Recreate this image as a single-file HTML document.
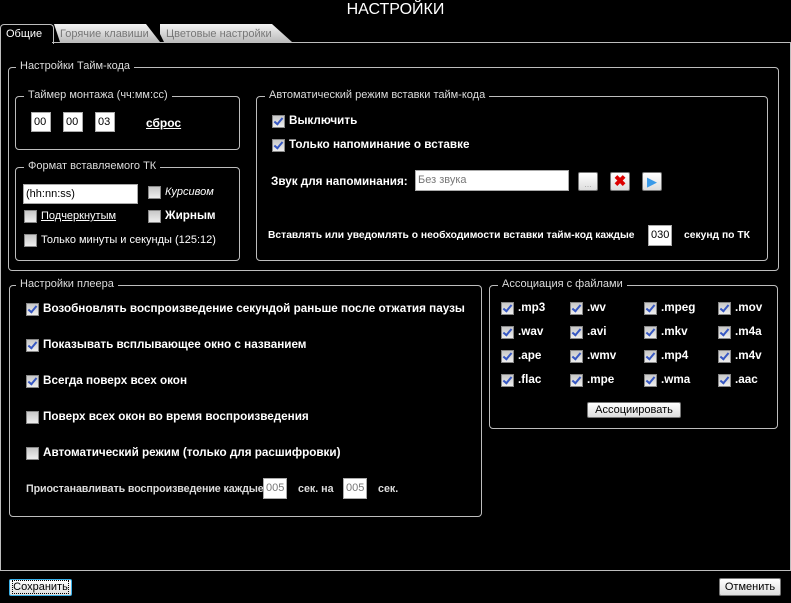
<!DOCTYPE html>
<html><head><meta charset="utf-8"><style>
body{margin:0;width:791px;height:603px;background:#000;position:relative;overflow:hidden;font-family:"Liberation Sans",sans-serif;font-size:11px;color:#fff}
.a{position:absolute;white-space:nowrap}
.g{position:absolute;border:1px solid #bdbdbd;border-radius:4px}
.gl{position:absolute;background:#000;padding:0 4px;color:#ddd;font-size:11px;white-space:nowrap}
.in{position:absolute;background:#fff;border:1px solid #aaa;color:#000;font-size:11px;box-sizing:border-box;padding:3px 2px}
.cb{position:absolute;width:13px;height:13px;background:linear-gradient(#c8c8c8,#eee);border:1px solid #888;box-sizing:border-box}
.cb.c::after{content:"";position:absolute;left:3px;top:0px;width:3px;height:7px;border:solid #3657c2;border-width:0 2px 2px 0;transform:rotate(40deg)}
.b{font-weight:bold}
.L{font-size:11.7px}
.btn{position:absolute;background:linear-gradient(#fff,#ddd);border:1px solid #777;border-radius:2px;color:#000;font-size:11px;text-align:center;box-sizing:border-box}
</style></head><body>
<div class="a" style="left:0;width:791px;text-align:center;top:1px;font-size:16px;color:#fff">НАСТРОЙКИ</div>
<div class="a" style="left:160px;top:24px;width:126px;height:18px;background:linear-gradient(#f4f4f4,#bbb);clip-path:polygon(0 0,112px 0,100% 100%,4px 100%,0 10px);color:#777;padding-left:6px;line-height:20px">Цветовые настройки</div>
<div class="a" style="left:54px;top:24px;width:100px;height:18px;background:linear-gradient(#f4f4f4,#bbb);clip-path:polygon(0 0,92px 0,100% 100%,6px 100%);color:#777;padding-left:6px;line-height:20px">Горячие клавиши</div>
<div class="a" style="left:0;top:24px;width:52px;height:19px;border:1px solid #bdbdbd;border-bottom:none;border-radius:4px 4px 0 0;background:#000"></div>
<div class="a" style="left:6px;top:28px;color:#fff">Общие</div>
<div class="a" style="left:0;top:42px;width:789px;height:528px;border:1px solid #bdbdbd;border-top:none"></div>
<div class="a" style="left:52px;top:42px;width:738px;height:1px;background:#bdbdbd"></div>

<div class="g" style="left:8px;top:67px;width:769px;height:202px"></div>
<div class="gl" style="left:16px;top:60px">Настройки Тайм-кода</div>
<div class="g" style="left:15px;top:96px;width:223px;height:52px"></div>
<div class="gl" style="left:24px;top:89px">Таймер монтажа (чч:мм:сс)</div>
<div class="in" style="left:31px;top:112px;width:20px;height:20px">00</div>
<div class="in" style="left:63px;top:112px;width:20px;height:20px">00</div>
<div class="in" style="left:95px;top:112px;width:20px;height:20px">03</div>
<div class="a b" style="left:146px;top:116px;text-decoration:underline;font-size:12px">сброс</div>

<div class="g" style="left:15px;top:167px;width:223px;height:92px"></div>
<div class="gl" style="left:24px;top:160px">Формат вставляемого ТК</div>
<div class="in" style="left:23px;top:184px;width:115px;height:20px">(hh:nn:ss)</div>
<div class="cb" style="left:148px;top:186px"></div><div class="a" style="left:165px;top:186px;font-style:italic">Курсивом</div>
<div class="cb" style="left:24px;top:210px"></div><div class="a" style="left:41px;top:210px;text-decoration:underline">Подчеркнутым</div>
<div class="cb" style="left:148px;top:210px"></div><div class="a b L" style="left:165px;top:209px">Жирным</div>
<div class="cb" style="left:24px;top:234px"></div><div class="a" style="left:41px;top:234px">Только минуты и секунды (125:12)</div>

<div class="g" style="left:256px;top:96px;width:510px;height:163px"></div>
<div class="gl" style="left:265px;top:89px">Автоматический режим вставки тайм-кода</div>
<div class="cb c" style="left:272px;top:115px"></div><div class="a b L" style="left:289px;top:114px">Выключить</div>
<div class="cb c" style="left:272px;top:139px"></div><div class="a b L" style="left:289px;top:138px">Только напоминание о вставке</div>
<div class="a b L" style="left:271px;top:175px">Звук для напоминания:</div>
<div class="in" style="left:415px;top:170px;width:154px;height:21px;color:#777">Без звука</div>
<div class="btn" style="left:578px;top:172px;width:20px;height:19px;color:#aaa;font-size:9px;line-height:22px">...</div>
<div class="btn" style="left:610px;top:172px;width:20px;height:19px;color:#d00;font-weight:bold;font-size:15px;line-height:17px">✖</div>
<div class="btn" style="left:642px;top:172px;width:20px;height:19px;color:#3a9ae8;font-size:13px;line-height:18px">▶</div>
<div class="a b" style="left:268px;top:230px;font-size:10.3px">Вставлять или уведомлять о необходимости вставки тайм-код каждые</div>
<div class="in" style="left:648px;top:225px;width:24px;height:21px">030</div>
<div class="a b" style="left:684px;top:230px;font-size:10.3px">секунд по ТК</div>

<div class="g" style="left:9px;top:285px;width:471px;height:230px"></div>
<div class="gl" style="left:16px;top:278px">Настройки плеера</div>
<div class="cb c" style="left:26px;top:303px"></div><div class="a b L" style="left:43px;top:302px">Возобновлять воспроизведение секундой раньше после отжатия паузы</div>
<div class="cb c" style="left:26px;top:339px"></div><div class="a b L" style="left:43px;top:338px">Показывать всплывающее окно с названием</div>
<div class="cb c" style="left:26px;top:375px"></div><div class="a b L" style="left:43px;top:374px">Всегда поверх всех окон</div>
<div class="cb" style="left:26px;top:411px"></div><div class="a b L" style="left:43px;top:410px">Поверх всех окон во время воспроизведения</div>
<div class="cb" style="left:26px;top:447px"></div><div class="a b L" style="left:43px;top:446px">Автоматический режим (только для расшифровки)</div>
<div class="a b" style="left:26px;top:483px;font-size:10.7px;color:#ddd;letter-spacing:-0.1px">Приостанавливать воспроизведение каждые</div>
<div class="in" style="left:263px;top:478px;width:24px;height:21px;color:#777">005</div>
<div class="a b" style="left:298px;top:483px;font-size:10.7px;color:#ddd">сек. на</div>
<div class="in" style="left:343px;top:478px;width:24px;height:21px;color:#777">005</div>
<div class="a b" style="left:378px;top:483px;font-size:10.7px;color:#ddd">сек.</div>

<div class="g" style="left:489px;top:285px;width:287px;height:142px"></div>
<div class="gl" style="left:498px;top:278px">Ассоциация с файлами</div>
<div class="cb c" style="left:501px;top:302px"></div><div class="a b L" style="left:518px;top:301px">.mp3</div>
<div class="cb c" style="left:570px;top:302px"></div><div class="a b L" style="left:587px;top:301px">.wv</div>
<div class="cb c" style="left:644px;top:302px"></div><div class="a b L" style="left:661px;top:301px">.mpeg</div>
<div class="cb c" style="left:718px;top:302px"></div><div class="a b L" style="left:735px;top:301px">.mov</div>
<div class="cb c" style="left:501px;top:326px"></div><div class="a b L" style="left:518px;top:325px">.wav</div>
<div class="cb c" style="left:570px;top:326px"></div><div class="a b L" style="left:587px;top:325px">.avi</div>
<div class="cb c" style="left:644px;top:326px"></div><div class="a b L" style="left:661px;top:325px">.mkv</div>
<div class="cb c" style="left:718px;top:326px"></div><div class="a b L" style="left:735px;top:325px">.m4a</div>
<div class="cb c" style="left:501px;top:350px"></div><div class="a b L" style="left:518px;top:349px">.ape</div>
<div class="cb c" style="left:570px;top:350px"></div><div class="a b L" style="left:587px;top:349px">.wmv</div>
<div class="cb c" style="left:644px;top:350px"></div><div class="a b L" style="left:661px;top:349px">.mp4</div>
<div class="cb c" style="left:718px;top:350px"></div><div class="a b L" style="left:735px;top:349px">.m4v</div>
<div class="cb c" style="left:501px;top:374px"></div><div class="a b L" style="left:518px;top:373px">.flac</div>
<div class="cb c" style="left:570px;top:374px"></div><div class="a b L" style="left:587px;top:373px">.mpe</div>
<div class="cb c" style="left:644px;top:374px"></div><div class="a b L" style="left:661px;top:373px">.wma</div>
<div class="cb c" style="left:718px;top:374px"></div><div class="a b L" style="left:735px;top:373px">.aac</div>
<div class="btn" style="left:587px;top:402px;width:94px;height:16px;line-height:14px">Ассоциировать</div>

<div class="btn" style="left:9px;top:579px;width:63px;height:17px;line-height:15px;border:1px solid #3ab0e8"><span style="outline:1px dotted #000">Сохранить</span></div>
<div class="btn" style="left:719px;top:578px;width:62px;height:18px;line-height:16px">Отменить</div>
</body></html>
